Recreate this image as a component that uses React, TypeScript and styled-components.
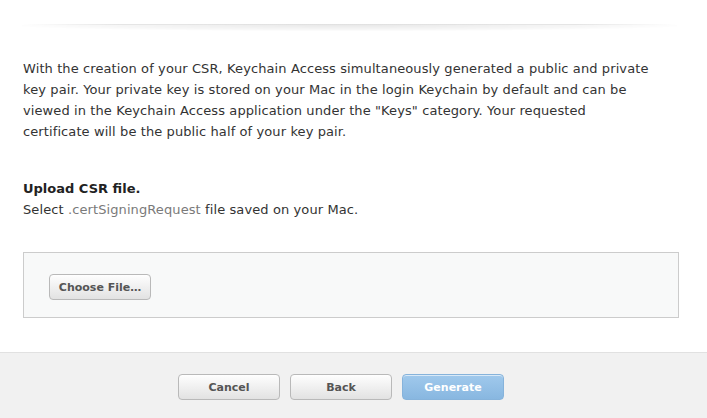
import React from "react";
import styled, { createGlobalStyle } from "styled-components";

const GlobalStyle = createGlobalStyle`
  html, body {
    margin: 0;
    padding: 0;
    background: #ffffff;
  }
  body {
    font-family: "DejaVu Sans", "Liberation Sans", sans-serif;
    color: #333333;
  }
`;

const Page = styled.div`
  width: 707px;
  height: 418px;
  display: flex;
  flex-direction: column;
  overflow: hidden;
`;

const Content = styled.div`
  flex: 1;
  padding: 24px 28px 0 23px;
`;

const Divider = styled.div`
  height: 6px;
  margin: 0 2px 0 -1px;
  background: radial-gradient(
    ellipse at 50% 0%,
    rgba(0, 0, 0, 0.09) 0%,
    rgba(0, 0, 0, 0.03) 55%,
    rgba(0, 0, 0, 0) 75%
  );
  border-top: 1px solid transparent;
  border-image: linear-gradient(
      to right,
      rgba(0, 0, 0, 0),
      rgba(0, 0, 0, 0.1) 15%,
      rgba(0, 0, 0, 0.1) 85%,
      rgba(0, 0, 0, 0)
    )
    1;
`;

const Text = styled.p`
  margin: 0;
  font-size: 13px;
  line-height: 21px;
  letter-spacing: 0.1px;
  color: #333333;
`;

const Paragraph = styled(Text)`
  margin-top: 27px;
  max-width: 630px;
`;

const Heading = styled.h4`
  margin: 36px 0 0;
  font-size: 13px;
  line-height: 21px;
  font-weight: bold;
  color: #222222;
`;

const Muted = styled.span`
  color: #7a7a7a;
`;

const UploadBox = styled.div`
  margin-top: 32px;
  height: 66px;
  box-sizing: border-box;
  border: 1px solid #cccccc;
  background: #f8f9f9;
  padding: 21px 0 0 25px;
`;

const Button = styled.button<{ $primary?: boolean }>`
  width: 102px;
  height: 26px;
  padding: 0;
  border-radius: 4px;
  font-family: "DejaVu Sans", "Liberation Sans", sans-serif;
  font-size: 11px;
  font-weight: bold;
  cursor: pointer;
  border: 1px solid ${(p) => (p.$primary ? "#86b3db" : "#b9b9b9")};
  color: ${(p) => (p.$primary ? "#ffffff" : "#555555")};
  background: ${(p) =>
    p.$primary
      ? "linear-gradient(to bottom, #a0c9ec, #88b7e0)"
      : "linear-gradient(to bottom, #fefefe, #e2e2e2)"};
  box-shadow: 0 1px 0 rgba(255, 255, 255, 0.6) inset;
`;

const Footer = styled.div`
  height: 66px;
  box-sizing: border-box;
  background: #f1f1f1;
  border-top: 1px solid #e1e1e1;
  display: flex;
  gap: 10px;
  padding: 21px 0 0 178px;
`;

export default function App() {
  return (
    <>
      <GlobalStyle />
      <Page>
        <Content>
          <Divider />
          <Paragraph>
            With the creation of your CSR, Keychain Access simultaneously
            generated a public and private key pair. Your private key is stored
            on your Mac in the login Keychain by default and can be viewed in
            the Keychain Access application under the "Keys" category. Your
            requested certificate will be the public half of your key pair.
          </Paragraph>
          <Heading>Upload CSR file.</Heading>
          <Text>
            Select <Muted>.certSigningRequest</Muted> file saved on your Mac.
          </Text>
          <UploadBox>
            <Button>Choose File…</Button>
          </UploadBox>
        </Content>
        <Footer>
          <Button>Cancel</Button>
          <Button>Back</Button>
          <Button $primary>Generate</Button>
        </Footer>
      </Page>
    </>
  );
}
